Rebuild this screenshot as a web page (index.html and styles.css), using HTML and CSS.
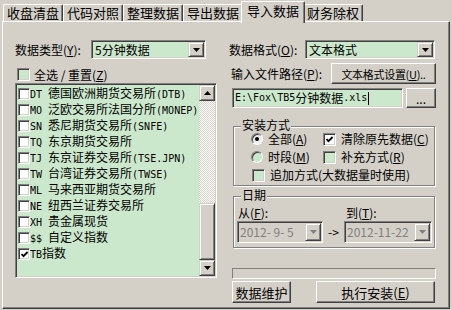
FILE: index.html
```html
<!DOCTYPE html>
<html lang="zh-CN">
<head>
    <meta charset="UTF-8">
    <title>导入数据</title>
    <link rel="stylesheet" href="styles.css">
</head>
<body>
    <main class="window">
        <nav class="tabs">
            <div class="tab">收盘清盘</div>
            <div class="tab">代码对照</div>
            <div class="tab">整理数据</div>
            <div class="tab">导出数据</div>
            <div class="tab tab-active">导入数据</div>
            <div class="tab">财务除权</div>
        </nav>

        <section class="panel">
            <!-- left: market list -->
            <div class="col-left">
                <div class="field-row">
                    <span class="field-label">数据类型(<u>Y</u>):</span>
                    <div class="combo combo-type">
                        <span class="combo-text">5分钟数据</span>
                        <span class="raised combo-btn"><svg width="7" height="4" viewBox="0 0 7 4"><path d="M0 0h7L3.5 4z"/></svg></span>
                    </div>
                </div>

                <div class="check-all">
                    <span class="check check-green"></span>
                    <span>全选 / 重置(<u>Z</u>)</span>
                </div>

                <div class="listbox">
                    <ul class="list-items">
                        <li><span class="check"></span><span class="item-text"><span class="lat">DT </span>德国欧洲期货交易所<span class="lat">(DTB)</span></span></li>
                        <li><span class="check"></span><span class="item-text"><span class="lat">MO </span>泛欧交易所法国分所<span class="lat">(MONEP)</span></span></li>
                        <li><span class="check"></span><span class="item-text"><span class="lat">SN </span>悉尼期货交易所<span class="lat">(SNFE)</span></span></li>
                        <li><span class="check"></span><span class="item-text"><span class="lat">TQ </span>东京期货交易所</span></li>
                        <li><span class="check"></span><span class="item-text"><span class="lat">TJ </span>东京证券交易所<span class="lat">(TSE.JPN)</span></span></li>
                        <li><span class="check"></span><span class="item-text"><span class="lat">TW </span>台湾证券交易所<span class="lat">(TWSE)</span></span></li>
                        <li><span class="check"></span><span class="item-text"><span class="lat">ML </span>马来西亚期货交易所</span></li>
                        <li><span class="check"></span><span class="item-text"><span class="lat">NE </span>纽西兰证券交易所</span></li>
                        <li><span class="check"></span><span class="item-text"><span class="lat">XH </span>贵金属现货</span></li>
                        <li><span class="check"></span><span class="item-text"><span class="lat">$$ </span>自定义指数</span></li>
                        <li><span class="check"><svg class="tick" width="7" height="7" viewBox="0 0 7 7"><polyline points="0.5,3 2.5,5.2 6.6,1"/></svg></span><span class="item-text"><span class="lat">TB</span>指数</span></li>
                    </ul>
                    <div class="scrollbar">
                        <div class="raised sb-btn"><svg width="7" height="4" viewBox="0 0 7 4"><path d="M3.5 0L7 4H0z"/></svg></div>
                        <div class="sb-track"></div>
                        <div class="raised sb-thumb"></div>
                        <div class="raised sb-btn"><svg width="7" height="4" viewBox="0 0 7 4"><path d="M0 0h7L3.5 4z"/></svg></div>
                    </div>
                </div>
            </div>

            <!-- right: import options -->
            <div class="col-right">
                <div class="field-row">
                    <span class="field-label">数据格式(<u>O</u>):</span>
                    <div class="combo combo-format">
                        <span class="combo-text">文本格式</span>
                        <span class="raised combo-btn"><svg width="7" height="4" viewBox="0 0 7 4"><path d="M0 0h7L3.5 4z"/></svg></span>
                    </div>
                </div>

                <div class="path-row">
                    <span class="path-label">输入文件路径(<u>P</u>):</span>
                    <button class="btn btn-setup">文本格式设置(<u>U</u>)..</button>
                </div>

                <div class="file-row">
                    <div class="field file-input"><span class="lat">E:\Fox\TB5</span>分钟数据<span class="lat">.xls</span><span class="caret"></span></div>
                    <button class="btn btn-browse">...</button>
                </div>

                <div class="group group-install">
                    <span class="group-title">安装方式</span>
                    <div class="opt-row">
                        <div class="opt opt-first">
                            <span class="radio radio-on"><span class="dot"></span></span>
                            <span>全部(<u>A</u>)</span>
                        </div>
                        <div class="opt">
                            <span class="check"><svg class="tick" width="7" height="7" viewBox="0 0 7 7"><polyline points="0.5,3 2.5,5.2 6.6,1"/></svg></span>
                            <span>清除原先数据(<u>C</u>)</span>
                        </div>
                    </div>
                    <div class="opt-row">
                        <div class="opt opt-first">
                            <span class="radio"></span>
                            <span>时段(<u>M</u>)</span>
                        </div>
                        <div class="opt">
                            <span class="check check-green"></span>
                            <span>补充方式(<u>R</u>)</span>
                        </div>
                    </div>
                    <div class="opt-row">
                        <div class="opt opt-wide">
                            <span class="check check-green"></span>
                            <span>追加方式(大数据量时使用)</span>
                        </div>
                    </div>
                </div>

                <div class="group group-date">
                    <span class="group-title">日期</span>
                    <div class="date-row">
                        <div class="date-col date-from">
                            <span class="date-label">从(<u>F</u>):</span>
                            <div class="picker">
                                <span class="picker-text">2012- 9- 5</span>
                                <span class="raised picker-btn"><svg width="7" height="4" viewBox="0 0 7 4"><path d="M0 0h7L3.5 4z"/></svg></span>
                            </div>
                        </div>
                        <span class="date-arrow">-&gt;</span>
                        <div class="date-col date-to">
                            <span class="date-label">到(<u>T</u>):</span>
                            <div class="picker">
                                <span class="picker-text">2012-11-22</span>
                                <span class="raised picker-btn"><svg width="7" height="4" viewBox="0 0 7 4"><path d="M0 0h7L3.5 4z"/></svg></span>
                            </div>
                        </div>
                    </div>
                </div>

                <div class="progress"></div>

                <div class="action-row">
                    <button class="btn btn-maint">数据维护</button>
                    <button class="btn btn-run">执行安装(<u>E</u>)</button>
                </div>
            </div>
        </section>
    </main>
</body>
</html>
```

FILE: styles.css
```css
/* Global */
body {
    margin: 0;
    background-color: #d4d0c8;
    font-family: "Noto Sans CJK SC", sans-serif;
    font-size: 12px;
    line-height: 16px;
    color: #000;
}

u {
    text-decoration-thickness: 1px;
    text-underline-offset: 1px;
}

/* latin runs drawn in a narrow mono face, like the bitmap font */
.lat {
    font-family: "DejaVu Sans Mono", monospace;
    font-size: 10px;
    white-space: pre;
}

.window {
    width: 452px;
    height: 310px;
    padding: 0 2px;
    box-sizing: border-box;
    overflow: hidden;
}

/* Tabs */
.tabs {
    display: flex;
    align-items: flex-end;
    height: 21px;
    padding-left: 1px;
}

.tab {
    width: 60px;
    height: 17px;
    box-sizing: border-box;
    border: 1px solid;
    border-bottom: none;
    border-color: #fff #404040 #404040 #fff;
    border-radius: 2px 2px 0 0;
    box-shadow: inset -1px 0 #808080;
    text-align: center;
    font-size: 13px;
    line-height: 15px;
}

.tab-active {
    width: 64px;
    height: 22px;
    margin: 0 -2px -2px;
    position: relative;
    z-index: 1;
    background-color: #d4d0c8;
    line-height: 18px;
}

/* Panel */
.panel {
    display: flex;
    gap: 12px;
    width: 448px;
    height: 288px;
    box-sizing: border-box;
    padding: 18px 0 0 12px;
    border: 1px solid;
    border-color: #fff #404040 #404040 #fff;
    box-shadow: inset -1px -1px #808080;
}

.col-left {
    display: flex;
    flex-direction: column;
    width: 202px;
}

.col-right {
    display: flex;
    flex-direction: column;
    width: 207px;
}

/* 3D helpers */
.raised {
    display: flex;
    align-items: center;
    justify-content: center;
    box-sizing: border-box;
    background-color: #d4d0c8;
    border: 1px solid;
    border-color: #d4d0c8 #404040 #404040 #d4d0c8;
    box-shadow: inset 1px 1px #fff, inset -1px -1px #808080;
}

.field, .combo, .listbox, .picker {
    box-sizing: border-box;
    border: 1px solid;
    border-color: #808080 #fff #fff #808080;
    padding: 1px;
    box-shadow: inset 1px 1px #404040, inset -1px -1px #d4d0c8;
}

.btn {
    box-sizing: border-box;
    height: 100%;
    padding: 0;
    background-color: #d4d0c8;
    border: 1px solid;
    border-color: #fff #404040 #404040 #fff;
    box-shadow: inset -1px -1px #808080;
    font-family: inherit;
    font-size: 12px;
    color: #000;
}

/* Combos */
.field-row {
    display: flex;
    align-items: center;
    height: 19px;
}

.field-label {
    width: 76px;
    flex-shrink: 0;
}

.combo {
    display: flex;
    align-items: center;
    height: 19px;
    background-color: #cce8cc;
}

.combo-type { width: 115px; }
.combo-format { width: 130px; }

.combo-text {
    flex: 1;
    padding-left: 2px;
    line-height: 15px;
}

.combo-btn {
    width: 16px;
    height: 15px;
}

/* Check boxes and radios */
.check {
    display: inline-flex;
    align-items: center;
    justify-content: center;
    width: 13px;
    height: 13px;
    flex-shrink: 0;
    box-sizing: border-box;
    background-color: #fff;
    border: 1px solid;
    border-color: #808080 #fff #fff #808080;
    box-shadow: inset 1px 1px #404040, inset -1px -1px #d4d0c8;
}

.check-green {
    background-color: #cce8cc;
}

.tick polyline {
    fill: none;
    stroke: #000;
    stroke-width: 1.8;
}

.radio {
    display: inline-flex;
    align-items: center;
    justify-content: center;
    width: 12px;
    height: 12px;
    flex-shrink: 0;
    box-sizing: border-box;
    border-radius: 50%;
    background-color: #cce8cc;
    border: 1px solid;
    border-color: #808080 #fff #fff #808080;
    box-shadow: inset 1px 1px #404040;
}

.radio-on {
    background-color: #eee;
}

.dot {
    width: 4px;
    height: 4px;
    border-radius: 50%;
    background-color: #000;
}

.check-all {
    display: flex;
    align-items: center;
    gap: 4px;
    height: 13px;
    margin: 9px 0 0 2px;
}

/* Market list */
.listbox {
    display: flex;
    width: 202px;
    height: 195px;
    margin-top: 2px;
    background-color: #cce8cc;
}

.list-items {
    flex: 1;
    margin: 0;
    padding: 1px 0 0 1px;
    list-style: none;
    overflow: hidden;
}

.list-items li {
    display: flex;
    align-items: center;
    height: 16px;
    white-space: nowrap;
}

.list-items .check {
    width: 12px;
    height: 12px;
}

.scrollbar {
    display: flex;
    flex-direction: column;
    width: 16px;
}

.sb-btn {
    height: 16px;
}

.sb-track {
    flex: 1;
    background: repeating-conic-gradient(#fff 0 25%, #d4d0c8 0 50%) 0 0 / 2px 2px;
}

.sb-thumb {
    height: 57px;
}

/* File path */
.path-row {
    display: flex;
    align-items: center;
    height: 21px;
    margin-top: 4px;
}

.path-label {
    margin-left: 2px;
}

.btn-setup {
    width: 105px;
    margin-left: auto;
    font-size: 11px;
    letter-spacing: -0.3px;
}

.file-row {
    display: flex;
    height: 20px;
    margin-top: 4px;
}

.file-input {
    display: flex;
    align-items: center;
    width: 171px;
    margin-left: 3px;
    padding-left: 2px;
    background-color: #cce8cc;
    white-space: nowrap;
}

.caret {
    width: 1px;
    height: 13px;
    margin-left: 1px;
    background-color: #000;
}

.btn-browse {
    width: 30px;
    margin-left: auto;
}

/* Group boxes */
.group {
    position: relative;
    width: 202px;
    margin-left: 4px;
    box-sizing: border-box;
    border: 1px solid #808080;
    box-shadow: inset 1px 1px #fff, 1px 1px #fff;
}

.group-title {
    position: absolute;
    top: -8px;
    left: 7px;
    padding: 0 1px;
    line-height: 12px;
    background-color: #d4d0c8;
}

.group-install {
    margin-top: 18px;
    padding: 3px 0 1px;
}

.opt-row {
    display: flex;
    align-items: center;
    height: 18px;
    line-height: 12px;
}

.opt {
    display: flex;
    align-items: center;
    gap: 5px;
}

.opt-first {
    width: 72px;
    margin-left: 17px;
}

.opt-wide {
    margin-left: 18px;
}

.group-date {
    margin-top: 10px;
    padding: 8px 0 4px 3px;
}

.date-row {
    display: flex;
}

.date-col {
    display: flex;
    flex-direction: column;
}

.date-from { width: 86px; }
.date-to { width: 88px; }

.date-label {
    height: 16px;
    padding-left: 1px;
}

.date-to .date-label {
    padding-left: 2px;
}

.date-arrow {
    align-self: flex-end;
    width: 21px;
    line-height: 22px;
    text-align: center;
}

.picker {
    display: flex;
    align-items: center;
    height: 22px;
    background-color: #d4d0c8;
}

.picker-text {
    flex: 1;
    padding-left: 1px;
    color: #808080;
    white-space: pre;
}

.picker-btn {
    width: 16px;
    height: 18px;
}

.picker-btn svg {
    fill: #808080;
}

/* Progress and actions */
.progress {
    width: 204px;
    height: 11px;
    margin: 20px 0 0 3px;
    box-sizing: border-box;
    border: 1px solid;
    border-color: #808080 #fff #fff #808080;
}

.action-row {
    display: flex;
    height: 22px;
    margin-top: 2px;
}

.btn-maint {
    width: 59px;
    margin-left: 3px;
    font-size: 13px;
}

.btn-run {
    width: 119px;
    margin-left: auto;
    margin-right: 1px;
    font-size: 13px;
}
```
